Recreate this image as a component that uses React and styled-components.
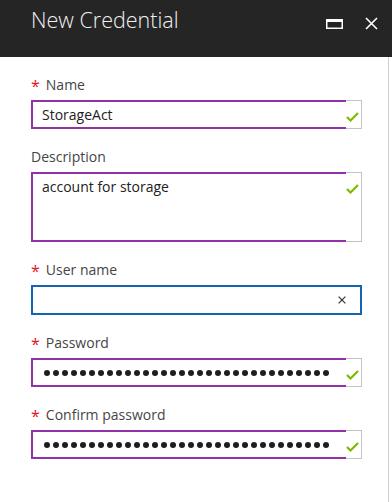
import React from "react"
import styled, { createGlobalStyle } from "styled-components"

const GlobalStyle = createGlobalStyle`
  html, body {
    margin: 0;
    padding: 0;
    background: #ffffff;
  }
  body {
    font-family: "Open Sans", "Noto Sans", sans-serif;
  }
`

const Blade = styled.div`
  width: 392px;
  height: 502px;
  display: flex;
  flex-direction: column;
  overflow: hidden;
`

const Header = styled.header`
  height: 57px;
  flex-shrink: 0;
  background: #252525;
  display: flex;
  align-items: flex-start;
  padding: 6px 0 0 31px;
  box-sizing: border-box;
`

const Title = styled.h1`
  margin: 0;
  flex: 1;
  font-size: 21.5px;
  line-height: 28px;
  font-weight: 300;
  color: #f2f2f2;
`

const HeaderButtons = styled.div`
  display: flex;
  align-items: center;
  gap: 22px;
  padding: 11px 14px 0 0;
`

const IconButton = styled.button`
  border: none;
  background: none;
  padding: 0;
  margin: 0;
  display: flex;
  cursor: pointer;
`

const Body = styled.main`
  flex: 1;
  width: 389px;
  box-sizing: border-box;
  border-right: 1px solid #cfcfcf;
  padding: 18px 0 0 31px;
  display: flex;
  flex-direction: column;
  gap: 18px;
`

const Field = styled.div`
  width: 331px;
  display: flex;
  flex-direction: column;
`

const Label = styled.label`
  height: 20px;
  line-height: 20px;
  margin-bottom: 5px;
  font-size: 14px;
  color: #454545;
  display: flex;
  align-items: center;
  gap: 6px;
`

const Star = styled.span`
  color: #e81123;
  font-size: 16px;
  position: relative;
  top: 1px;
`

const Box = styled.div`
  height: ${(p) => p.$height}px;
  box-sizing: border-box;
  border: 1px solid #c4c4c4;
  display: flex;
  background: #fff;
`

const Value = styled.div`
  flex: 1;
  margin: -1px 0 -1px -1px;
  border: 2px solid #9132ab;
  border-right: none;
  padding: ${(p) => (p.$multi ? "3px 0 0 9px" : "0 0 0 9px")};
  display: flex;
  align-items: ${(p) => (p.$multi ? "flex-start" : "center")};
  font-size: 14px;
  line-height: 20px;
  color: #222;
`

const Valid = styled.div`
  width: 15px;
  padding-top: 11px;
  display: flex;
  justify-content: flex-start;
  align-items: flex-start;
`

const FocusBox = styled.div`
  height: 30px;
  box-sizing: border-box;
  border: 2px solid #1563b3;
  display: flex;
  align-items: center;
  justify-content: flex-end;
  padding-right: 14px;
`

const Dots = styled.div`
  display: flex;
  gap: 3px;
  padding-left: 2px;
`

const Dot = styled.span`
  width: 6px;
  height: 6px;
  border-radius: 50%;
  background: #1e1e1e;
`

const Check = () => (
  <svg width="13" height="10" viewBox="0 0 13 10">
    <polyline points="1,5 4.5,8.5 12,1" fill="none" stroke="#7fba00" strokeWidth="2.2" />
  </svg>
)

const MaximizeIcon = () => (
  <svg width="17" height="10" viewBox="0 0 17 10">
    <rect x="0.75" y="0.75" width="15.5" height="8.5" fill="none" stroke="#fff" strokeWidth="1.5" />
    <rect x="0" y="0" width="17" height="3" fill="#fff" />
  </svg>
)

const CloseIcon = ({ size = 13, color = "#fff", width = 1.6 }) => (
  <svg width={size} height={size} viewBox="0 0 13 13">
    <path d="M1 1 L12 12 M12 1 L1 12" stroke={color} strokeWidth={width} fill="none" />
  </svg>
)

const Password = () => (
  <Dots>
    {Array.from({ length: 32 }).map((_, i) => (
      <Dot key={i} />
    ))}
  </Dots>
)

const TextField = ({ label, required, height = 29, multi, children }) => (
  <Field>
    <Label>
      {required && <Star>*</Star>}
      {label}
    </Label>
    <Box $height={height}>
      <Value $multi={multi}>{children}</Value>
      <Valid>
        <Check />
      </Valid>
    </Box>
  </Field>
)

const App = () => {
  return (
    <Blade>
      <GlobalStyle />
      <Header>
        <Title>New Credential</Title>
        <HeaderButtons>
          <IconButton aria-label="maximize">
            <MaximizeIcon />
          </IconButton>
          <IconButton aria-label="close">
            <CloseIcon />
          </IconButton>
        </HeaderButtons>
      </Header>
      <Body>
        <TextField label="Name" required>
          StorageAct
        </TextField>
        <TextField label="Description" height={70} multi>
          account for storage
        </TextField>
        <Field>
          <Label>
            <Star>*</Star>
            User name
          </Label>
          <FocusBox>
            <CloseIcon size={8} color="#333" width={2} />
          </FocusBox>
        </Field>
        <TextField label="Password" required>
          <Password />
        </TextField>
        <TextField label="Confirm password" required>
          <Password />
        </TextField>
      </Body>
    </Blade>
  )
}

export default App
